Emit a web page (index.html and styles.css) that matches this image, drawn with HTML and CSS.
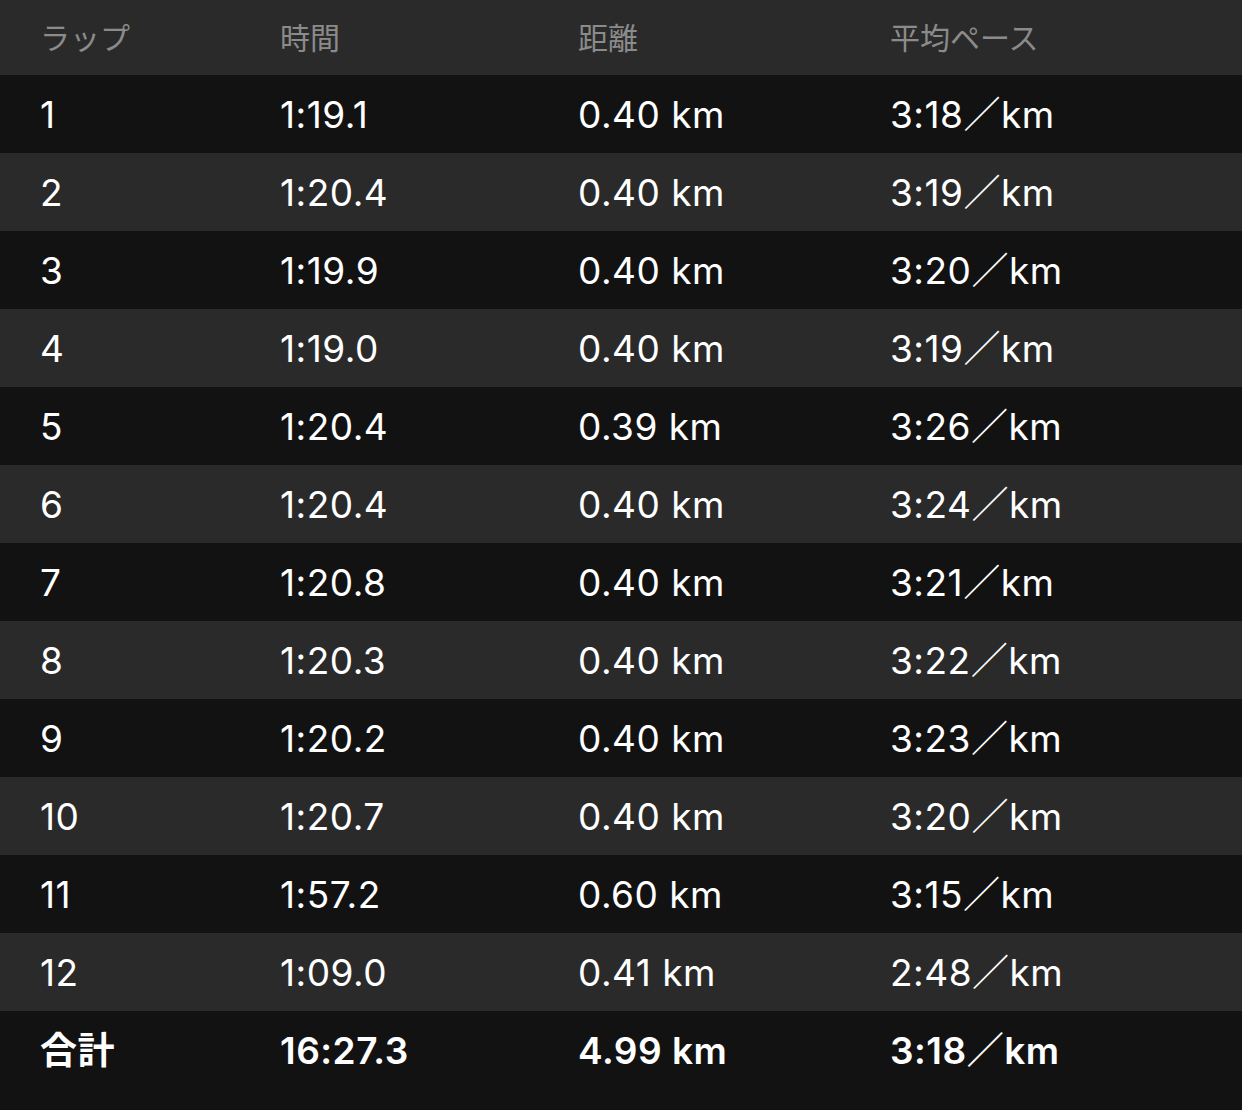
FILE: index.html
```html
<!DOCTYPE html>
<html lang="ja">
<head>
<meta charset="utf-8">
<link rel="stylesheet" href="styles.css">
</head>
<body>
<div class="table">
  <div class="row head"><span>ラップ</span><span>時間</span><span>距離</span><span>平均ペース</span></div>
  <div class="row dark"><span>1</span><span>1:19.1</span><span>0.40 km</span><span>3:18／km</span></div>
  <div class="row light"><span>2</span><span>1:20.4</span><span>0.40 km</span><span>3:19／km</span></div>
  <div class="row dark"><span>3</span><span>1:19.9</span><span>0.40 km</span><span>3:20／km</span></div>
  <div class="row light"><span>4</span><span>1:19.0</span><span>0.40 km</span><span>3:19／km</span></div>
  <div class="row dark"><span>5</span><span>1:20.4</span><span>0.39 km</span><span>3:26／km</span></div>
  <div class="row light"><span>6</span><span>1:20.4</span><span>0.40 km</span><span>3:24／km</span></div>
  <div class="row dark"><span>7</span><span>1:20.8</span><span>0.40 km</span><span>3:21／km</span></div>
  <div class="row light"><span>8</span><span>1:20.3</span><span>0.40 km</span><span>3:22／km</span></div>
  <div class="row dark"><span>9</span><span>1:20.2</span><span>0.40 km</span><span>3:23／km</span></div>
  <div class="row light"><span>10</span><span>1:20.7</span><span>0.40 km</span><span>3:20／km</span></div>
  <div class="row dark"><span>11</span><span>1:57.2</span><span>0.60 km</span><span>3:15／km</span></div>
  <div class="row light"><span>12</span><span>1:09.0</span><span>0.41 km</span><span>2:48／km</span></div>
  <div class="row dark total"><span>合計</span><span>16:27.3</span><span>4.99 km</span><span>3:18／km</span></div>
</div>
</body>
</html>
```
FILE: styles.css
```css
html, body {
  margin: 0;
  padding: 0;
  background: #121212;
}
body {
  font-family: Inter, "Noto Sans CJK JP", sans-serif;
  color: #ffffff;
}
.table {
  display: flex;
  flex-direction: column;
}
.row {
  display: grid;
  grid-template-columns: 240px 298px 312px 1fr;
  align-items: center;
  height: 78px;
  padding-left: 40px;
  font-size: 37px;
  line-height: 1;
  letter-spacing: 0.5px;
}
.row.head {
  height: 75px;
  background: #2a2a2a;
  color: #8b8b8b;
  font-size: 30px;
  letter-spacing: 0;
}
.row.dark {
  background: #121212;
}
.row.light {
  background: #2a2a2a;
}
.row.total {
  font-weight: 600;
}
```
